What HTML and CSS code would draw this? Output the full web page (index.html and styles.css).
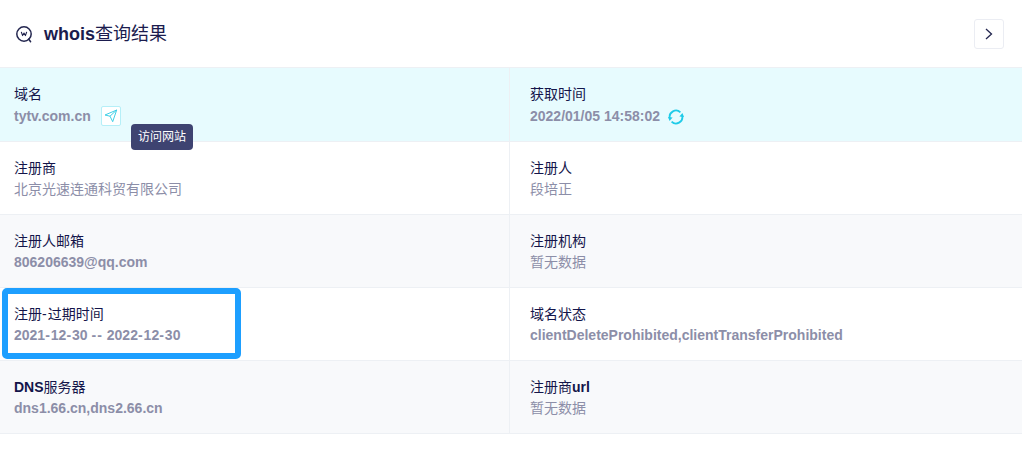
FILE: index.html
```html
<!DOCTYPE html>
<html lang="zh-CN">
<head>
<meta charset="utf-8">
<title>whois查询结果</title>
<link rel="stylesheet" href="styles.css">
</head>
<body>
<section class="panel">
  <header class="head">
    <div class="head-title">
      <svg class="logo" width="20" height="20" viewBox="0 0 20 20" fill="none">
        <circle cx="10" cy="10" r="7.2" stroke="#23264f" stroke-width="1.5"/>
        <path d="M14.6 15l2 2.7" stroke="#23264f" stroke-width="1.5" stroke-linecap="round"/>
        <path d="M7.4 8.2l1.2 3.4L10 9l1.4 2.6 1.2-3.4" stroke="#23264f" stroke-width="1.1" stroke-linejoin="round" stroke-linecap="round"/>
      </svg>
      <h1 class="title"><b>whois</b>查询结果</h1>
    </div>
    <button class="next" type="button" aria-label="下一步">
      <svg width="8" height="12" viewBox="0 0 8 12" fill="none"><path d="M1 1l5.5 5L1 11" stroke="#23264f" stroke-width="1.3"/></svg>
    </button>
  </header>
  <div class="grid">
    <div class="cell cyan">
      <div class="label">域名</div>
      <div class="value strong with-icon">tytv.com.cn
        <span class="send">
          <svg width="14" height="14" viewBox="0 0 14 14" fill="none"><path d="M12.7 1L1 6l5 1.2 2.7 5.5z M12.7 1L6 7.2" stroke="#3fcfe6" stroke-width="1" stroke-linejoin="round"/></svg>
        </span>
      </div>
      <div class="tip">访问网站</div>
    </div>
    <div class="cell cyan">
      <div class="label">获取时间</div>
      <div class="value strong with-icon narrow">2022/01/05 14:58:02
        <svg class="refresh" width="16" height="16" viewBox="0 0 16 16" fill="none">
          <path d="M1.8 9.2A6.3 6.3 0 0 1 12.4 3.4" stroke="#1fcbe8" stroke-width="1.8"/>
          <path d="M14.2 6.8A6.3 6.3 0 0 1 3.6 12.6" stroke="#1fcbe8" stroke-width="1.8"/>
          <path d="M16 8l-4.6-.6L14.4 4z" fill="#1fcbe8"/>
          <path d="M0 8l4.6.6L1.6 12z" fill="#1fcbe8"/>
        </svg>
      </div>
    </div>
    <div class="cell">
      <div class="label">注册商</div>
      <div class="value">北京光速连通科贸有限公司</div>
    </div>
    <div class="cell">
      <div class="label">注册人</div>
      <div class="value">段培正</div>
    </div>
    <div class="cell gray">
      <div class="label">注册人邮箱</div>
      <div class="value strong">806206639@qq.com</div>
    </div>
    <div class="cell gray">
      <div class="label">注册机构</div>
      <div class="value">暂无数据</div>
    </div>
    <div class="cell">
      <div class="label">注册<span class="hy">-</span>过期时间</div>
      <div class="value strong">2021<span class="hy">-</span>12<span class="hy">-</span>30 <span class="hy">-</span><span class="hy">-</span> 2022<span class="hy">-</span>12<span class="hy">-</span>30</div>
      <div class="mark"></div>
    </div>
    <div class="cell">
      <div class="label">域名状态</div>
      <div class="value strong">clientDeleteProhibited,clientTransferProhibited</div>
    </div>
    <div class="cell gray">
      <div class="label"><b>DNS</b>服务器</div>
      <div class="value strong">dns1.66.cn,dns2.66.cn</div>
    </div>
    <div class="cell gray">
      <div class="label">注册商<b>url</b></div>
      <div class="value">暂无数据</div>
    </div>
  </div>
</section>
</body>
</html>
```

FILE: styles.css
```css
* { box-sizing: border-box; }
html, body { margin: 0; padding: 0; background: #fff; }
body {
  font-family: "Liberation Sans", "Noto Sans CJK SC", sans-serif;
  color: #1b1c4e;
  overflow: hidden;
}
.panel { width: 1022px; }
.head {
  height: 68px;
  padding: 0 18px 0 14px;
  display: flex;
  align-items: center;
  justify-content: space-between;
  border-bottom: 1px solid #edf0f4;
}
.head-title { display: flex; align-items: center; gap: 10px; }
.logo { display: block; }
.title { margin: 0; font-size: 18px; font-weight: 400; line-height: 24px; }
.title b { font-weight: 700; }
.next {
  width: 30px;
  height: 30px;
  padding: 0;
  display: flex;
  align-items: center;
  justify-content: center;
  background: #fff;
  border: 1px solid #ebedf3;
  border-radius: 3px;
}
.grid {
  display: grid;
  grid-template-columns: 510px 512px;
  grid-template-rows: 74px;
  grid-auto-rows: 73px;
}
.cell {
  position: relative;
  padding: 16px 14px 0;
  border-bottom: 1px solid #edf0f4;
}
.cell:nth-child(even) { padding-left: 20px; }
.cell:nth-child(odd) { border-right: 1px solid #edf0f4; }
.cyan { background: #e7fbfe; }
.gray { background: #f8f9fb; }
.label { font-size: 14px; line-height: 21px; color: #14154a; }
.label b { font-weight: 700; }
.value { font-size: 14px; line-height: 21px; color: #8c8ea8; white-space: nowrap; }
.strong { font-weight: 700; }
.hy { letter-spacing: 1px; }
.with-icon { margin-top: 1px; display: flex; align-items: center; gap: 10px; }
.with-icon.narrow { gap: 8px; }
.send {
  width: 20px;
  height: 20px;
  margin-top: -1px;
  display: flex;
  align-items: center;
  justify-content: center;
  background: #fff;
  border: 1px solid #b5eff8;
  border-radius: 2px;
}
.refresh { display: block; }
.tip {
  position: absolute;
  left: 131px;
  top: 56px;
  z-index: 2;
  width: 62px;
  height: 26px;
  text-align: center;
  font-size: 12px;
  line-height: 26px;
  color: #fff;
  background: #3e4371;
  border-radius: 4px;
}
.mark {
  position: absolute;
  left: 2px;
  top: 0;
  width: 239px;
  height: 71px;
  border: 6px solid #1d9fff;
  border-radius: 5px;
}
```
